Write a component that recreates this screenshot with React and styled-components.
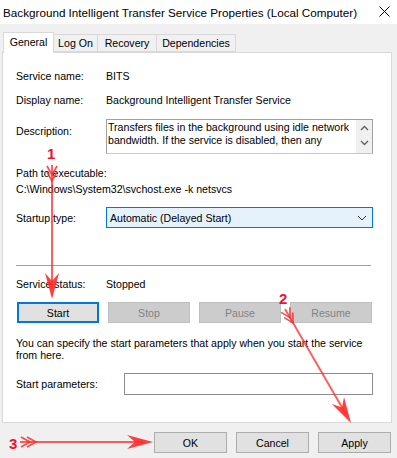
import styled, { createGlobalStyle } from "styled-components";

const GlobalStyle = createGlobalStyle`
    body {
        margin: 0;
        background: #f0f0f0;
        font-family: "Liberation Sans", Arial, sans-serif;
        font-size: 10.6px;
        color: #000;
    }
`

const RED = "#ff2a2a";

function Arrow({ x1, y1, x2, y2 }) {
    const len = Math.hypot(x2 - x1, y2 - y1);
    const dx = (x2 - x1) / len;
    const dy = (y2 - y1) / len;
    const px = -dy;
    const py = dx;
    const at = (d, s) => `${x1 + dx * d + px * s},${y1 + dy * d + py * s}`;
    const chevron = (d) => `${at(d, -5)} ${at(d + 9, 0)} ${at(d, 5)}`;
    const back = (d, s) => `${x2 - dx * d + px * s},${y2 - dy * d + py * s}`;

    return (
        <g>
            <line x1={x1} y1={y1} x2={x2 - dx * 10} y2={y2 - dy * 10} stroke={RED} strokeWidth="2" opacity="0.75" />
            <polyline points={chevron(1)} fill="none" stroke={RED} strokeWidth="1.6" opacity="0.85" />
            <polyline points={chevron(7)} fill="none" stroke={RED} strokeWidth="1.6" opacity="0.85" />
            <polygon points={`${x2},${y2} ${back(26, -7)} ${back(18, 0)} ${back(26, 7)}`} fill={RED} opacity="0.9" />
        </g>
    )
}

export default function App() {
    return (
        <>
            <GlobalStyle />
            <Window>
                <TitleBar>
                    <span>Background Intelligent Transfer Service Properties (Local Computer)</span>
                    <svg width="11" height="11" viewBox="0 0 11 11">
                        <path d="M0.5 0.5 L10.5 10.5 M10.5 0.5 L0.5 10.5" stroke="#000" strokeWidth="1" />
                    </svg>
                </TitleBar>
                <TabStrip>
                    <Tab active width={51}>General</Tab>
                    <Tab width={45}>Log On</Tab>
                    <Tab width={60}>Recovery</Tab>
                    <Tab width={80}>Dependencies</Tab>
                </TabStrip>
                <Panel>
                    <Row top={15}>
                        <Label>Service name:</Label>
                        <span>BITS</span>
                    </Row>
                    <Row top={8}>
                        <Label>Display name:</Label>
                        <span>Background Intelligent Transfer Service</span>
                    </Row>
                    <Row top={11} align="flex-start">
                        <Label offset={6}>Description:</Label>
                        <TextArea>
                            <div>
                                Transfers files in the background using idle network<br />
                                bandwidth. If the service is disabled, then any
                            </div>
                            <ScrollBar>
                                <svg width="9" height="6" viewBox="0 0 9 6">
                                    <path d="M1 5 L4.5 1.5 L8 5" fill="none" stroke="#606060" strokeWidth="1.3" />
                                </svg>
                                <svg width="9" height="6" viewBox="0 0 9 6">
                                    <path d="M1 1 L4.5 4.5 L8 1" fill="none" stroke="#606060" strokeWidth="1.3" />
                                </svg>
                            </ScrollBar>
                        </TextArea>
                    </Row>
                    <Row top={11}>
                        <span>Path to executable:</span>
                    </Row>
                    <Row>
                        <span>C:\Windows\System32\svchost.exe -k netsvcs</span>
                    </Row>
                    <Row top={10}>
                        <Label>Startup type:</Label>
                        <Select>
                            <span>Automatic (Delayed Start)</span>
                            <svg width="10" height="6" viewBox="0 0 10 6">
                                <path d="M1 1 L5 5 L9 1" fill="none" stroke="#333" strokeWidth="1" />
                            </svg>
                        </Select>
                    </Row>
                    <Separator />
                    <Row top={10}>
                        <Label>Service status:</Label>
                        <span>Stopped</span>
                    </Row>
                    <ButtonRow>
                        <Button focused>Start</Button>
                        <Button disabled>Stop</Button>
                        <Button disabled>Pause</Button>
                        <Button disabled>Resume</Button>
                    </ButtonRow>
                    <Note>
                        You can specify the start parameters that apply when you start the service<br />
                        from here.
                    </Note>
                    <Row top={12}>
                        <Label wide>Start parameters:</Label>
                        <Input />
                    </Row>
                </Panel>
                <Footer>
                    <Button width={73}>OK</Button>
                    <Button width={73}>Cancel</Button>
                    <Button width={73}>Apply</Button>
                </Footer>
                <Overlay width="397" height="458" viewBox="0 0 397 458">
                    <Arrow x1={52} y1={165} x2={52} y2={299} />
                    <Arrow x1={285} y1={309} x2={351} y2={423} />
                    <Arrow x1={20} y1={442} x2={153} y2={442} />
                    <Num x="47" y="159">1</Num>
                    <Num x="279" y="304">2</Num>
                    <Num x="9" y="449">3</Num>
                </Overlay>
            </Window>
        </>
    )
}

const Window = styled.div`
    position: relative;
    width: 397px;
    height: 458px;
    display: flex;
    flex-direction: column;
    background: #f0f0f0;
    overflow: hidden;
`
const TitleBar = styled.div`
    height: 24px;
    background: #fff;
    display: flex;
    align-items: center;
    justify-content: space-between;
    padding: 0 7px 0 3px;
    font-size: 11.7px;

    svg {
        margin-top: -2px;
    }
`
const TabStrip = styled.div`
    display: flex;
    align-items: flex-end;
    height: 20px;
    margin: 8px 0 0 3px;
    position: relative;
    z-index: 1;
`
const Tab = styled.div`
    width: ${props => props.width}px;
    height: ${props => props.active ? "21px" : "18px"};
    margin-bottom: ${props => props.active ? "-1px" : "0"};
    box-sizing: border-box;
    display: flex;
    align-items: center;
    justify-content: center;
    background: ${props => props.active ? "#fff" : "#f0f0f0"};
    border: 1px solid #d9d9d9;
    border-bottom: ${props => props.active ? "none" : "1px solid #d9d9d9"};
    margin-left: ${props => props.active ? "0" : "-1px"};
    padding-bottom: ${props => props.active ? "2px" : "0"};
`
const Panel = styled.div`
    margin-left: 2px;
    width: 390px;
    height: 371px;
    box-sizing: border-box;
    background: #fff;
    border: 1px solid #d9d9d9;
    padding: 0 18px 0 13px;
    display: flex;
    flex-direction: column;
`
const Row = styled.div`
    display: flex;
    align-items: ${props => props.align || "center"};
    min-height: 16px;
    margin-top: ${props => props.top || 0}px;
`
const Label = styled.span`
    width: ${props => props.wide ? "108px" : "90px"};
    flex-shrink: 0;
    margin-top: ${props => props.offset || 0}px;
`
const TextArea = styled.div`
    flex: 1;
    height: 35px;
    box-sizing: border-box;
    border: 1px solid #a0a0a0;
    border-bottom-color: #c8c8c8;
    display: flex;
    justify-content: space-between;
    padding-left: 1px;
    line-height: 13px;

    div {
        padding-top: 1px;
        white-space: nowrap;
        overflow: hidden;
    }
`
const ScrollBar = styled.div`
    width: 16px;
    background: #f0f0f0;
    display: flex;
    flex-direction: column;
    align-items: center;
    justify-content: space-around;
    padding: 3px 0;
    box-sizing: border-box;
`
const Select = styled.div`
    flex: 1;
    height: 21px;
    box-sizing: border-box;
    border: 1px solid #0078d7;
    background: #e5f1fb;
    display: flex;
    align-items: center;
    justify-content: space-between;
    padding: 0 5px 0 3px;
`
const Separator = styled.div`
    height: 1px;
    background: #a0a0a0;
    margin: 37px 2px 0 0;
`
const ButtonRow = styled.div`
    display: grid;
    grid-template-columns: repeat(4, 1fr);
    column-gap: 9px;
    margin: 10px 1px 0 1px;
`
const Button = styled.button`
    width: ${props => props.width ? props.width + "px" : "auto"};
    height: 21px;
    box-sizing: border-box;
    padding: 0;
    font-family: "Liberation Sans", Arial, sans-serif;
    font-size: 10.6px;
    color: #000;
    background: #e1e1e1;
    border: ${props => props.focused ? "2px solid #0078d7" : "1px solid #adadad"};

    &:disabled {
        background: #cccccc;
        border-color: #bfbfbf;
        color: #838383;
    }
`
const Note = styled.p`
    margin: 14px 0 0 0;
    line-height: 12px;
    white-space: nowrap;
`
const Input = styled.div`
    flex: 1;
    height: 22px;
    box-sizing: border-box;
    border: 1px solid #8c8c8c;
    background: #fff;
`
const Footer = styled.div`
    display: flex;
    justify-content: flex-end;
    gap: 9px;
    margin-top: 9px;
    padding-right: 6px;
`
const Overlay = styled.svg`
    position: absolute;
    top: 0;
    left: 0;
    pointer-events: none;
`
const Num = styled.text`
    font-family: "Liberation Sans", Arial, sans-serif;
    font-size: 15px;
    font-weight: bold;
    fill: #f01030;
`
